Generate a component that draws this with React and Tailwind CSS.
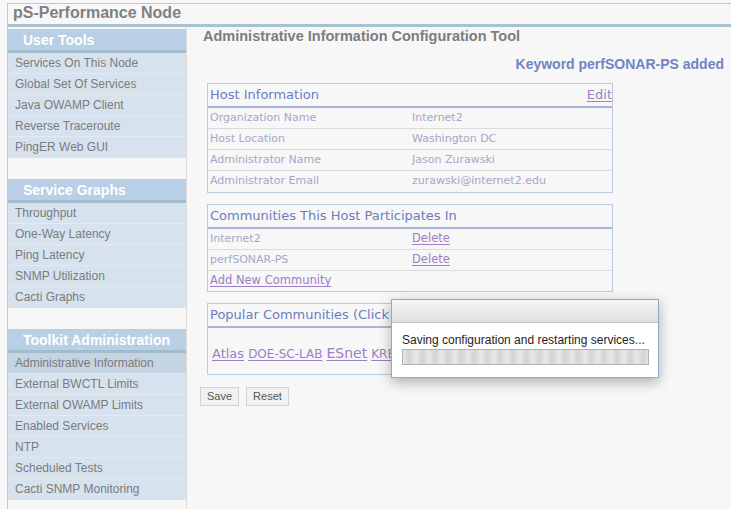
const userTools = ['Services On This Node', 'Global Set Of Services', 'Java OWAMP Client', 'Reverse Traceroute', 'PingER Web GUI']
const serviceGraphs = ['Throughput', 'One-Way Latency', 'Ping Latency', 'SNMP Utilization', 'Cacti Graphs']
const toolkitAdmin = ['Administrative Information', 'External BWCTL Limits', 'External OWAMP Limits', 'Enabled Services', 'NTP', 'Scheduled Tests', 'Cacti SNMP Monitoring']

const hostInfo = [
  ['Organization Name', 'Internet2'],
  ['Host Location', 'Washington DC'],
  ['Administrator Name', 'Jason Zurawski'],
  ['Administrator Email', 'zurawski@internet2.edu'],
]

const linkClass = 'text-[#9c7fc6] underline underline-offset-2'

function Section({ title, items, active }) {
  return (
    <div>
      <div className="h-[24px] bg-[#b9cfe5] border-b-[3px] border-[#a3bccb] pl-[15px] text-[14px] leading-[23px] font-bold text-white">
        {title}
      </div>
      {items.map((item, i) => (
        <div
          key={item}
          className={`h-[21px] pl-[7px] text-[12px] leading-[21px] text-[#7b7b7b] border-b ${i === items.length - 1 ? 'border-[#e8e2cc]' : 'border-[#e6eaea]'} ${item === active ? 'bg-[#c5d4e3]' : 'bg-[#d6e3ef]'}`}
        >
          {item}
        </div>
      ))}
    </div>
  )
}

function Box({ title, right, children }) {
  return (
    <div className="ml-[7px] w-[406px] border border-[#b9cbe0] font-['DejaVu_Sans',sans-serif]">
      <div className="h-[24px] flex items-center justify-between pl-[2px] pr-0 border-b-2 border-[#a9b6d8]">
        <span className="text-[13px] text-[#6b7dc0] whitespace-nowrap">{title}</span>
        {right}
      </div>
      {children}
    </div>
  )
}

function Row({ left, right, last }) {
  return (
    <div className={`h-[21px] grid grid-cols-2 items-center text-[11px] text-[#a6a6c8] ${last ? '' : 'border-b border-[#dadada]'}`}>
      <div className="pl-[2px]">{left}</div>
      <div className="pl-[2px]">{right}</div>
    </div>
  )
}

export default function App() {
  return (
    <div className="relative w-[731px] h-[509px] overflow-hidden bg-[#f7f7f7] font-['Liberation_Sans',Arial,sans-serif]">
      <div className="ml-[7px] mt-[3px] h-[506px] border-l border-t border-[#c6c6c6] flex flex-col">
        <div className="h-[20px] pl-[5px] text-[16px] leading-[18px] font-bold text-[#808080]">pS-Performance Node</div>
        <div className="h-[3px] bg-[#a8c3d0]" />

        <div className="flex flex-1">
          {/* sidebar */}
          <div className="w-[179px] shrink-0 pt-[2px] border-r border-[#dcdcd4]">
            <Section title="User Tools" items={userTools} />
            <div className="h-[21px]" />
            <Section title="Service Graphs" items={serviceGraphs} />
            <div className="h-[21px]" />
            <Section title="Toolkit Administration" items={toolkitAdmin} active="Administrative Information" />
          </div>

          {/* main */}
          <div className="flex-1 pl-[13px] pr-[7px] pt-[1px]">
            <div className="pl-[3px] text-[14.5px] leading-[16px] font-bold text-[#7d7d7d]">
              Administrative Information Configuration Tool
            </div>
            <div className="mt-[12px] text-right text-[14px] leading-[16px] font-bold text-[#6f85c4]">
              Keyword perfSONAR-PS added
            </div>

            <div className="mt-[11px]">
              <Box title="Host Information" right={<a className={`${linkClass} text-[13px]`}>Edit</a>}>
                {hostInfo.map(([k, v], i) => (
                  <Row key={k} left={k} right={v} last={i === hostInfo.length - 1} />
                ))}
              </Box>
            </div>

            <div className="mt-[11px]">
              <Box title="Communities This Host Participates In">
                <Row left="Internet2" right={<a className={`${linkClass} text-[11.5px]`}>Delete</a>} />
                <Row left="perfSONAR-PS" right={<a className={`${linkClass} text-[11.5px]`}>Delete</a>} />
                <div className="h-[20px] flex items-center pl-[2px]">
                  <a className={`${linkClass} text-[11.5px]`}>Add New Community</a>
                </div>
              </Box>
            </div>

            <div className="mt-[11px]">
              <Box title="Popular Communities (Click to add)">
                <div className="h-[46px] pl-[4px] pt-[18px] flex items-baseline gap-[4px] whitespace-nowrap overflow-hidden">
                  <a className={`${linkClass} text-[13px] leading-none`}>Atlas</a>
                  <a className={`${linkClass} text-[12px] leading-none`}>DOE-SC-LAB</a>
                  <a className={`${linkClass} text-[14px] leading-none`}>ESnet</a>
                  <a className={`${linkClass} text-[12px] leading-none`}>KREONET</a>
                  <a className={`${linkClass} text-[13px] leading-none`}>LHC</a>
                  <a className={`${linkClass} text-[12px] leading-none`}>USATLAS</a>
                </div>
              </Box>
            </div>

            <div className="mt-[12px] flex gap-[7px]">
              <button className="h-[19px] px-[6px] border border-[#d2d2d2] bg-[#f1f1f1] text-[11px] leading-[17px] text-[#555]">Save</button>
              <button className="h-[19px] px-[6px] border border-[#d2d2d2] bg-[#f1f1f1] text-[11px] leading-[17px] text-[#555]">Reset</button>
            </div>
          </div>
        </div>
      </div>

      {/* modal dialog */}
      <div className="absolute left-[391px] top-[299px] w-[268px] h-[79px] border border-[#86acd2] bg-white shadow-[0_4px_12px_rgba(0,0,0,0.3)] flex flex-col">
        <div className="h-[23px] shrink-0 bg-gradient-to-b from-[#f7f7f7] to-[#dedede] border-b border-[#c4c4c4]" />
        <div className="pt-[10px] pl-[10px] pr-[10px]">
          <div className="text-[12px] leading-[14px] text-[#1e1e1e] whitespace-nowrap">Saving configuration and restarting services...</div>
          <div className="mt-[2px] w-[247px] h-[16px] border border-[#b2b2b2] bg-[repeating-linear-gradient(90deg,#e9e9e9_0px,#d3d3d3_6px,#e9e9e9_13px)]" />
        </div>
      </div>
    </div>
  )
}
